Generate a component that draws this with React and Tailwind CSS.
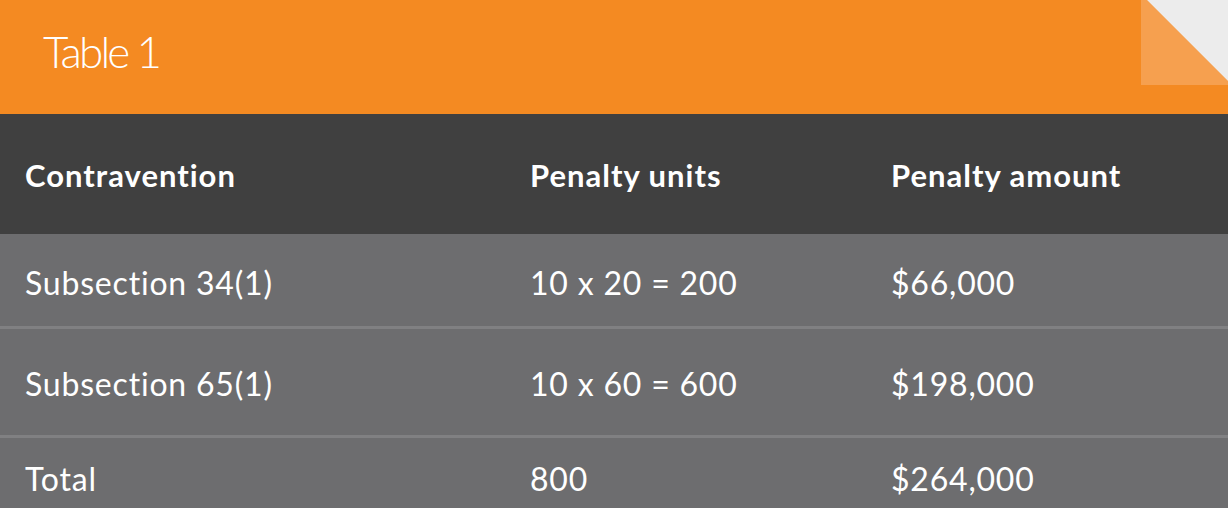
export default function App() {
  const font = { fontFamily: "Lato, 'Noto Sans', sans-serif" };
  return (
    <div className="w-[1228px] h-[508px] overflow-hidden bg-[#6d6d6f] text-white" style={font}>
      <div className="relative h-[114px] bg-[#f48a22] flex items-center pl-[43px]">
        <span className="text-[44px] font-light leading-none tracking-[-2.8px] -mt-[12px]">Table 1</span>
        <svg className="absolute top-0 right-0" width="87" height="85" viewBox="0 0 87 85">
          <polygon points="0,0 6,0 87,81 87,85 0,85" fill="#f6a04f" />
          <polygon points="6,0 87,0 87,81" fill="#ececec" />
        </svg>
      </div>
      <div className="h-[120px] bg-[#404040] flex items-center font-bold text-[31px] tracking-[1px] pt-[2px]">
        <div className="w-[530px] pl-[25px]">Contravention</div>
        <div className="w-[361px]">Penalty units</div>
        <div>Penalty amount</div>
      </div>
      <div className="h-[95px] flex items-center text-[32px] tracking-[0.8px] border-b-[3px] border-[#808082] pt-[6px]">
        <div className="w-[530px] pl-[25px]">Subsection 34(1)</div>
        <div className="w-[361px]">10 x 20 = 200</div>
        <div>$66,000</div>
      </div>
      <div className="h-[109px] flex items-center text-[32px] tracking-[0.8px] border-b-[3px] border-[#808082] pt-[4px]">
        <div className="w-[530px] pl-[25px]">Subsection 65(1)</div>
        <div className="w-[361px]">10 x 60 = 600</div>
        <div>$198,000</div>
      </div>
      <div className="h-[82px] flex items-center text-[32px] tracking-[0.8px]">
        <div className="w-[530px] pl-[25px]">Total</div>
        <div className="w-[361px]">800</div>
        <div>$264,000</div>
      </div>
    </div>
  );
}
